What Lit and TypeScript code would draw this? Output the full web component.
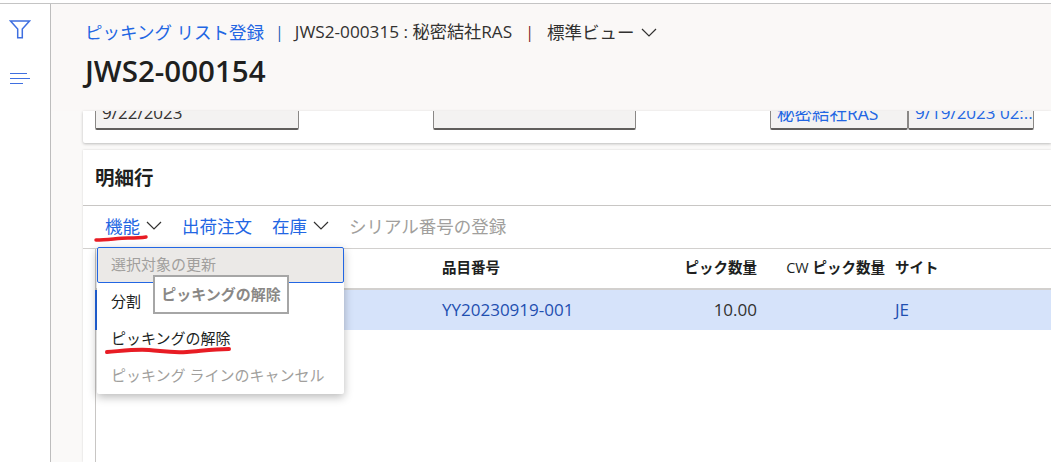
import { LitElement, html, css } from "lit";
import { customElement } from "lit/decorators.js";

const chevron = html`<svg class="chev" width="16" height="9" viewBox="0 0 16 9"><path d="M1 1l7 7 7-7" fill="none" stroke="currentColor" stroke-width="1.2"/></svg>`;

@customElement("app-root")
export class AppRoot extends LitElement {
  static styles = css`
    :host { display: block; width: 1051px; height: 462px; overflow: hidden; position: relative; background: #fff;
      font-family: "Open Sans", "Noto Sans CJK JP", sans-serif; font-size: 15px; color: #323130; }
    .page { display: flex; height: 458px; margin-top: 3px; border-top: 1px solid #c4c4c4; }
    .rail { flex: none; border-right: 1px solid #bdbdbd; display: flex; flex-direction: column; align-items: flex-start; padding: 16px 0 0 9px; gap: 33px; box-sizing: border-box; width: 51px; background: #fff; }
    .main { flex: 1; min-width: 0; display: flex; flex-direction: column; background: #faf9f8; }
    .head { height: 107px; flex: none; background: #faf8f7; padding: 16px 0 0 34px; box-sizing: border-box; }
    .crumb { display: flex; align-items: center; font-size: 17.5px; line-height: 24px; white-space: nowrap; }
    .crumb .link { color: #2266e3; }
    .crumb .sep { margin: 0 11px; font-size: 16px; }
    .crumb .sep.red { margin: 0 13px; }
    .sep.blue { color: #1a5fb4; }
    .sep.red { color: #7a1f2b; }
    .crumb .chev { margin-left: 7px; color: #323130; }
    .crumb .rec { font-size: 17.2px; }
    h1 { margin: 9px 0 0; font-size: 29.5px; line-height: 36px; font-weight: 600; color: #201f1e; letter-spacing: 0; }
    .card1 { margin-left: 32px; height: 32px; flex: none; background: #fff; box-shadow: 0 1px 3px rgba(0,0,0,.25); display: flex; align-items: flex-start; overflow: hidden; padding-left: 12px; border-radius: 0 0 0 2px; }
    .fields { display: flex; height: 19px; align-items: flex-end; }
    .field { height: 34px; flex: none; box-sizing: border-box; background: #f3f2f1; border: 1px solid #8a8886; border-bottom: 2px solid #605e5c; border-radius: 2px; font-size: 17px; line-height: 32px; padding: 0 6px; white-space: nowrap; overflow: hidden; }
    .fa { width: 204px; margin-right: 134px; }
    .fb { width: 203px; margin-right: 134px; }
    .fc { width: 138px; color: #2266e3; font-size: 17.5px; }
    .fd { width: 126px; color: #2266e3; }
    .card2 { margin: 7px 0 0 32px; flex: 1; background: #fff; box-shadow: 0 0 2px rgba(0,0,0,.15); display: flex; flex-direction: column; min-height: 0; }
    .title { height: 56px; flex: none; box-sizing: border-box; padding: 15px 0 0 12px; font-size: 19.5px; line-height: 26px; font-weight: 700; color: #201f1e; border-bottom: 1px solid #c8c6c4; }
    .tools { height: 43px; flex: none; box-sizing: border-box; padding: 0 0 4px 22px; display: flex; align-items: center; gap: 20px; font-size: 17.5px; color: #2266e3; white-space: nowrap; border-bottom: 1px solid #d2d0ce; }
    .tools .chev { margin-left: 6px; color: #323130; }
    .tool { display: flex; align-items: center; }
    .off { color: #a19f9d; }
    .table { flex: 1; margin-left: 12px; border-left: 1px solid #c8c6c4; display: flex; flex-direction: column; }
    .row { display: grid; grid-template-columns: 346px 149px 166px 128px 1fr; align-items: center; white-space: nowrap; box-sizing: border-box; }
    .r { text-align: right; }
    .hdr { height: 41px; padding-bottom: 4px; font-weight: 700; font-size: 14.5px; color: #201f1e; border-bottom: 2px solid #d2d0ce; }
    .hdr .cw { font-weight: 400; }
    .site { padding-left: 10px; }
    .sel { height: 40px; padding-bottom: 1px; background: #d6e3fa; margin-left: -1px; border-left: 2px solid #2266e3; grid-template-columns: 345px 149px 166px 128px 1fr; font-size: 17px; }
    .sel .lnk { color: #1f4fb0; }
    .menu { position: absolute; left: 97px; top: 247px; width: 247px; height: 147px; background: #fff; border-radius: 2px; box-shadow: 0 3px 10px rgba(0,0,0,.28); font-size: 15px; display: flex; flex-direction: column; }
    .mi { height: 37px; flex: none; box-sizing: border-box; padding: 0 0 2px 14px; display: flex; align-items: center; white-space: nowrap; color: #201f1e; }
    .mi.focus { background: #ebe9e7; border: 1px solid #2266e3; border-radius: 2px; padding: 0 0 3px 13px; color: #a19f9d; height: 36px; }
    .mi.off { color: #a19f9d; }
    .tip { position: absolute; left: 153px; top: 275px; width: 136px; height: 39px; box-sizing: border-box; border: 2px solid #a6a6a6; padding-bottom: 2px; background: #fff; color: #8a8886; font-weight: 700; font-size: 15px; display: flex; align-items: center; justify-content: center; white-space: nowrap; }
    .ink { position: absolute; left: 0; top: 0; pointer-events: none; }
  `;

  render() {
    return html`
      <div class="page">
        <nav class="rail">
          <svg width="22" height="19" viewBox="0 0 22 19"><path d="M1.5 1h19l-7.2 8v8.8h-4.6V9z" fill="none" stroke="#3f6fe0" stroke-width="1.5"/></svg>
          <svg width="22" height="13" viewBox="0 0 22 13"><path d="M1 1.5h17M1 6.5h20M1 11.5h13" fill="none" stroke="#3f6fe0" stroke-width="1.2"/></svg>
        </nav>
        <div class="main">
          <header class="head">
            <div class="crumb">
              <span class="link">ピッキング リスト登録</span>
              <span class="sep blue">|</span>
              <span class="rec">JWS2-000315 : 秘密結社RAS</span>
              <span class="sep red">|</span>
              <span>標準ビュー</span>${chevron}
            </div>
            <h1>JWS2-000154</h1>
          </header>
          <section class="card1">
            <div class="fields">
              <div class="field fa">9/22/2023</div>
              <div class="field fb"></div>
              <div class="field fc">秘密結社RAS</div>
              <div class="field fd">9/19/2023 02:...</div>
            </div>
          </section>
          <section class="card2">
            <div class="title">明細行</div>
            <div class="tools">
              <span class="tool">機能${chevron}</span>
              <span>出荷注文</span>
              <span class="tool">在庫${chevron}</span>
              <span class="off">シリアル番号の登録</span>
            </div>
            <div class="table">
              <div class="row hdr">
                <span></span><span>品目番号</span>
                <span class="r">ピック数量</span>
                <span class="r"><span class="cw">CW </span>ピック数量</span>
                <span class="site">サイト</span>
              </div>
              <div class="row sel">
                <span></span><span class="lnk">YY20230919-001</span>
                <span class="r">10.00</span>
                <span></span>
                <span class="site lnk">JE</span>
              </div>
            </div>
          </section>
        </div>
      </div>
      <div class="menu">
        <div class="mi focus">選択対象の更新</div>
        <div class="mi">分割</div>
        <div class="mi">ピッキングの解除</div>
        <div class="mi off">ピッキング ラインのキャンセル</div>
      </div>
      <div class="tip">ピッキングの解除</div>
      <svg class="ink" width="1051" height="462" viewBox="0 0 1051 462">
        <path d="M96 240c12 0 22-2 32-2 6 0 12 0 18-1" fill="none" stroke="#e81c24" stroke-width="3.5" stroke-linecap="round"/>
        <path d="M107 352c14-1 28-3 42-2 14 1 20 3 38 2 14-1 26-3 42-3" fill="none" stroke="#e81c24" stroke-width="4" stroke-linecap="round"/>
      </svg>
    `;
  }
}
